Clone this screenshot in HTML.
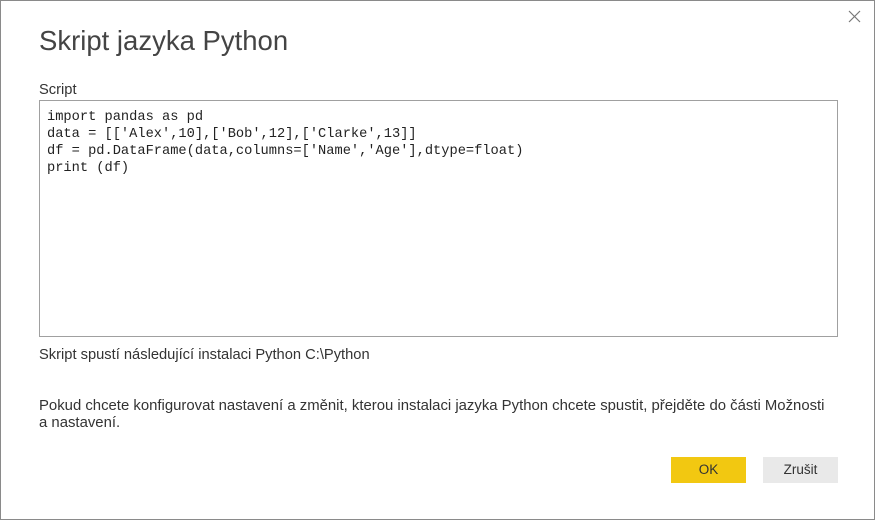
<!DOCTYPE html>
<html><head><meta charset="utf-8"><style>
html,body{margin:0;padding:0;}
body{width:875px;height:520px;position:relative;background:#fff;font-family:"Liberation Sans",sans-serif;color:#333;overflow:hidden}
.frame{position:absolute;left:0;top:0;width:873px;height:518px;border:1px solid #8a8a8a}
.t{position:absolute;white-space:nowrap}
.ta{position:absolute;left:39px;top:100px;width:797px;height:235px;border:1px solid #a0a0a0}
pre{position:absolute;left:47px;top:109px;margin:0;font-family:"Liberation Mono",monospace;font-size:13.7px;line-height:17px;color:#222}
.btn{position:absolute;top:457px;width:75px;height:26px;font-size:13.5px;line-height:26px;text-align:center;color:#333}
</style></head><body>
<div class="frame"></div>
<svg style="position:absolute;left:848px;top:10px" width="13" height="13"><path d="M1 1L12 12M12 1L1 12" stroke="#777" stroke-width="1.2"/></svg>
<div class="t" style="left:39px;top:25px;font-size:27.5px;font-weight:300;color:#444">Skript jazyka Python</div>
<div class="t" style="left:39px;top:82px;font-size:14.7px">Script</div>
<div class="ta"></div>
<pre>import pandas as pd
data = [['Alex',10],['Bob',12],['Clarke',13]]
df = pd.DataFrame(data,columns=['Name','Age'],dtype=float)
print (df)</pre>
<div class="t" style="left:39px;top:347px;font-size:14.7px">Skript spustí následující instalaci Python C:\Python</div>
<div class="t" style="left:39px;top:398px;font-size:14.9px;line-height:17px">Pokud chcete konfigurovat nastavení a změnit, kterou instalaci jazyka Python chcete spustit, přejděte do části Možnosti<br>a nastavení.</div>
<div class="btn" style="left:671px;background:#F2C811">OK</div>
<div class="btn" style="left:763px;background:#E9E9E9">Zrušit</div>
</body></html>
